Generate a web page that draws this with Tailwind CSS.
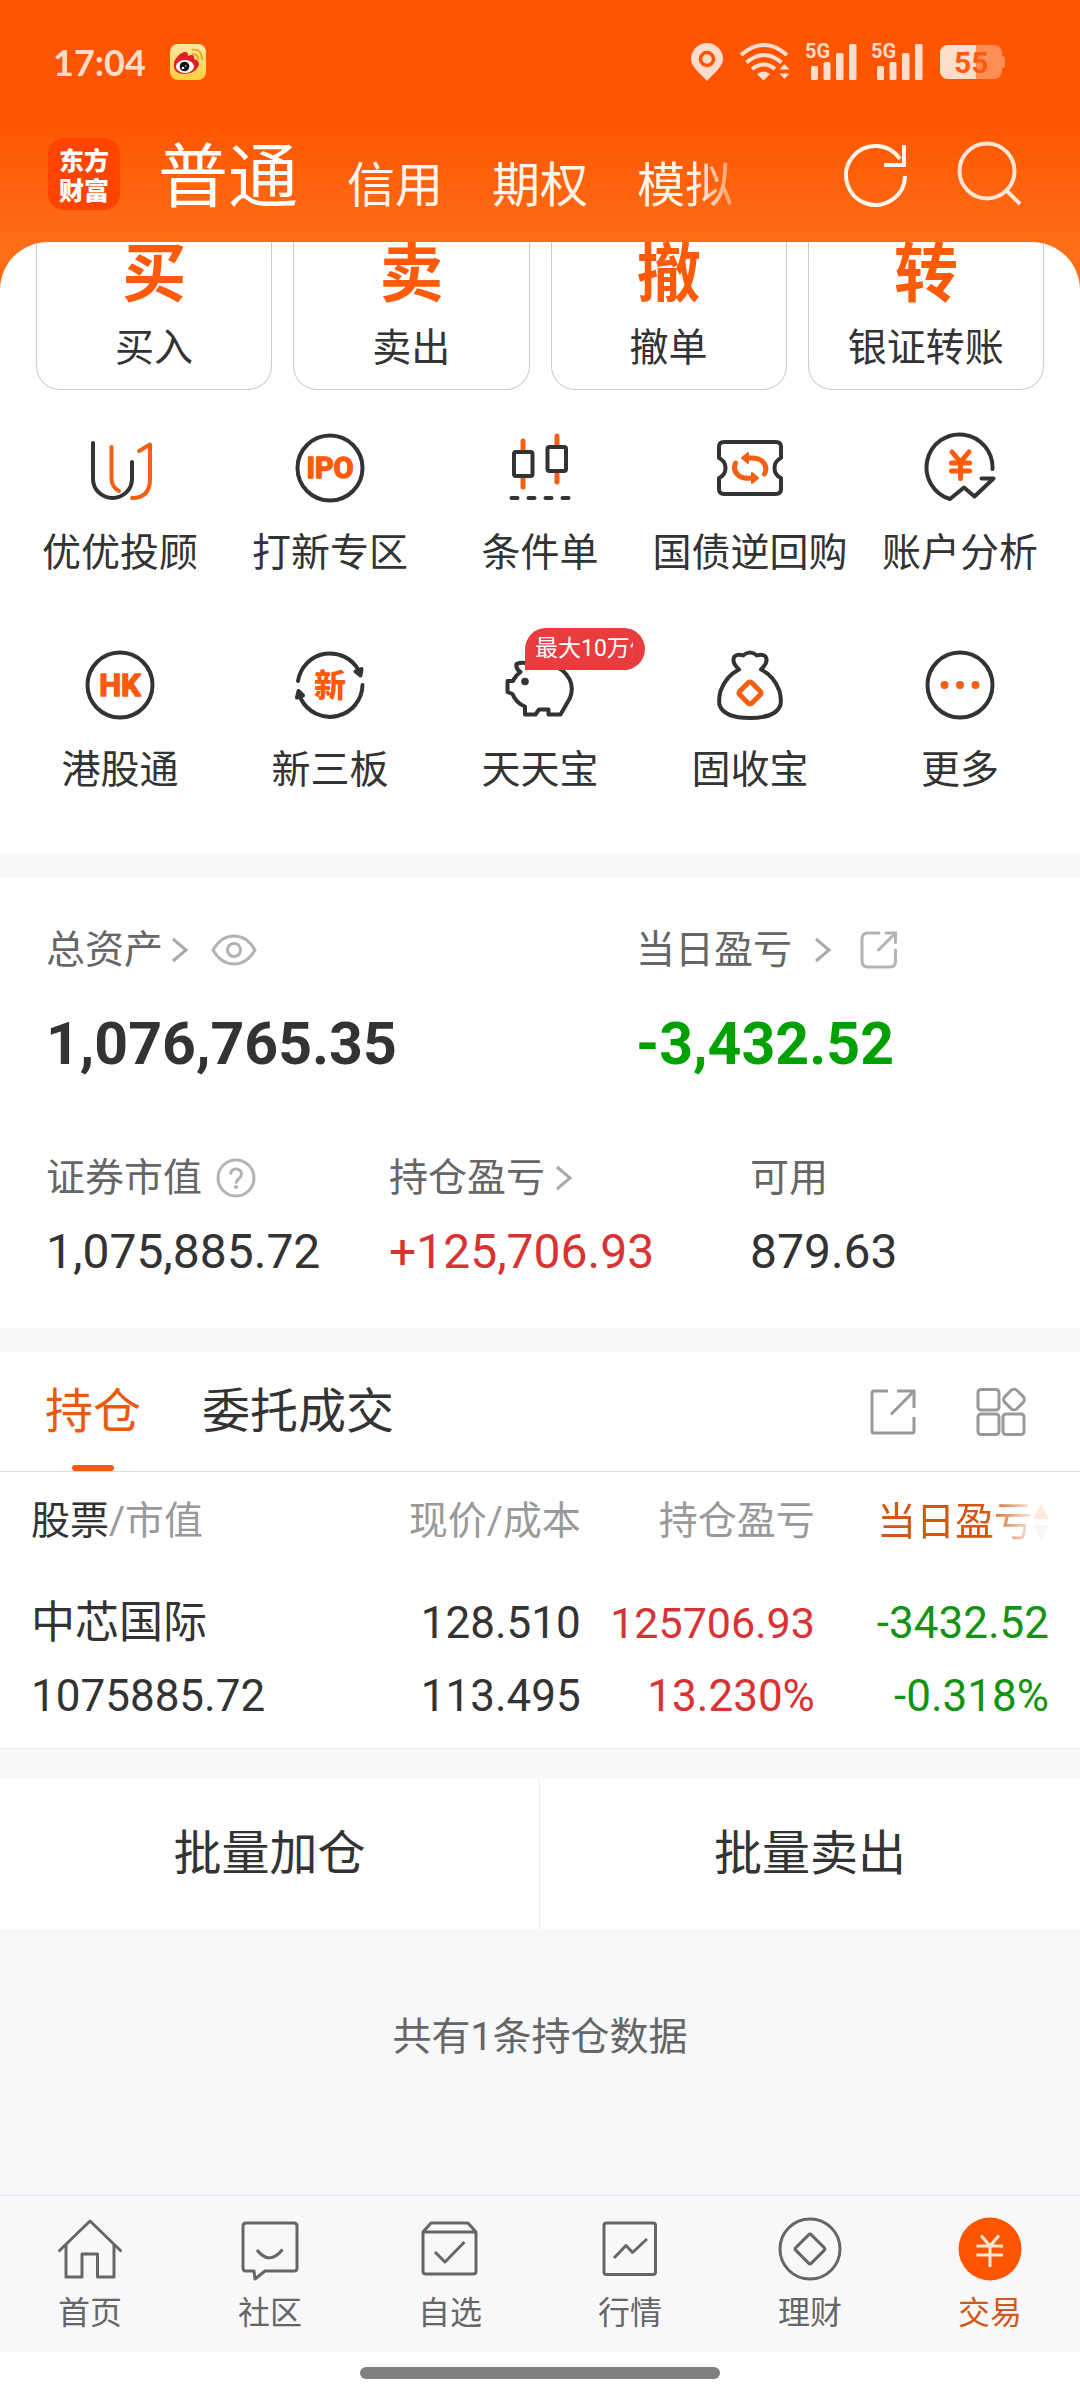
<!DOCTYPE html>
<html lang="zh-CN">
<head>
<meta charset="utf-8">
<meta name="viewport" content="width=device-width, initial-scale=1">
<title>交易</title>
<script src="https://cdn.jsdelivr.net/npm/@tailwindcss/browser@4"></script>
</head>
<body class="flex min-h-screen flex-col bg-[#f7f8fa] font-['Roboto','Noto_Sans_CJK_SC',sans-serif] text-[39px] leading-[44px] text-[#333]">

<!-- Header -->
<header class="bg-linear-to-b from-[#ff5500] from-50% to-[#ff6d16]">
  <div class="flex h-[120px] items-center justify-between pt-1 pr-[75px] pl-[53px]">
    <div class="flex items-center gap-6">
      <time class="font-['Lato',sans-serif] text-4xl font-bold text-[#ffdccc]">17:04</time>
      <svg class="h-9 w-9" viewBox="0 0 36 36" aria-label="微博">
        <defs><linearGradient id="wb" x1="0" y1="0" x2="0" y2="1"><stop offset="0" stop-color="#ffe9a6"/><stop offset="1" stop-color="#ffd03a"/></linearGradient></defs>
        <rect width="36" height="36" rx="8" fill="url(#wb)"/>
        <path d="M4 22C3 15 11 8 15 8c3 0 3 2 3 4 4-2 7-1 6 3 5 1 6 5 4 8-3 5-9 7-14 7-6 0-10-3-10-8Z" fill="#e01f26"/>
        <ellipse cx="15" cy="22.500" rx="9" ry="6.500" fill="#fff"/>
        <circle cx="14.500" cy="22.500" r="4.800" fill="#111"/><circle cx="13" cy="24" r="1.300" fill="#fff"/><circle cx="15.800" cy="22" r=".7" fill="#fff"/>
        <path d="M23 5.500q9 0 9 9.500M23 10q5 0 5 5" fill="none" stroke="#eba52c" stroke-width="2.200" stroke-linecap="round"/>
      </svg>
    </div>
    <div class="flex items-center">
      <svg class="mr-4 h-[38px] w-8" viewBox="0 0 32 38" aria-label="定位"><path d="M16 0a16 16 0 0 1 16 16c0 8-9 14-16 22C9 30 0 24 0 16A16 16 0 0 1 16 0Z" fill="#ffdccc"/><circle cx="16" cy="16" r="6.500" fill="none" stroke="#ff5500" stroke-width="3.500"/></svg>
      <svg class="mr-[14px] h-[38px] w-[52px]" viewBox="0 0 52 38" fill="none" stroke="#ffdccc" stroke-width="4" aria-label="无线网络"><path d="M2 12Q25-8 48 12M7.500 19.500q17.500-15 35 0M13 26q12-9 23 0"/><path d="M18 31q7-5 13 0l-6.500 6.500ZM40.500 26.500l5-5.500 5 5.500ZM40.500 30.500l5 5.500 5-5.500Z" fill="#ffdccc" stroke="none"/></svg>
      <svg class="mr-[14px] h-[38px] w-[52px] overflow-visible" viewBox="0 0 52 38" fill="#ffdccc" aria-label="5G 信号"><text x="0" y="15" font-size="20" font-weight="700" font-family="Roboto">5G</text><rect x="6" y="23" width="7" height="14" rx="1.500"/><rect x="18.500" y="19" width="7" height="18" rx="1.500"/><rect x="31" y="10" width="7.500" height="27" rx="1.500"/><rect x="44" y="1" width="7.500" height="36" rx="1.500"/></svg>
      <svg class="mr-4 h-[38px] w-[52px] overflow-visible" viewBox="0 0 52 38" fill="#ffdccc" aria-label="5G 信号"><text x="0" y="15" font-size="20" font-weight="700" font-family="Roboto">5G</text><rect x="6" y="23" width="7" height="14" rx="1.500"/><rect x="18.500" y="19" width="7" height="18" rx="1.500"/><rect x="31" y="10" width="7.500" height="27" rx="1.500"/><rect x="44" y="1" width="7.500" height="36" rx="1.500"/></svg>
      <svg class="h-[34px] w-[66px] overflow-visible" viewBox="0 0 66 34" aria-label="电量"><path d="M9 0H55a8 8 0 0 1 8 8v3q3 0 3 3v6q0 3-3 3v3a8 8 0 0 1-8 8H9a8 8 0 0 1-8-8V8a8 8 0 0 1 8-8Z" fill="#ff8e56"/><path d="M37 0H9a8 8 0 0 0-8 8v18a8 8 0 0 0 8 8h28Z" fill="#ffdccc"/><text x="15" y="28" font-size="30" font-weight="700" font-family="Roboto" fill="#ff5c0a">55</text></svg>
    </div>
  </div>
  <div class="flex h-[122px] items-center pb-[14px] pl-12 pr-[58px]">
    <a href="#" class="mr-[38px] flex h-[72px] w-[72px] shrink-0 flex-col items-center justify-center rounded-2xl bg-[#ff4400] font-['Noto_Sans_CJK_SC',sans-serif] text-[25px] leading-[30px] font-black text-white"><span>东方</span><span>财富</span></a>
    <nav class="flex min-w-0 flex-1 items-baseline gap-[49px] overflow-hidden pt-4 text-5xl leading-[76px] whitespace-nowrap text-[#fff5ec]">
      <button class="text-[70px] text-white">普通</button>
      <button>信用</button>
      <button>期权</button>
      <button class="[mask-image:linear-gradient(to_right,black_60%,#0006)]">模拟</button>
    </nav>
    <button class="mr-11" aria-label="刷新"><svg class="h-[68px] w-[68px]" viewBox="0 0 68 68" fill="none" stroke="#fff5ec" stroke-width="4"><path d="M63 36A29.500 29.500 0 1 1 58 19"/><path d="M62 5V25H42"/></svg></button>
    <button aria-label="搜索"><svg class="h-[68px] w-[68px]" viewBox="0 0 68 68" fill="none" stroke="#ffe6d6" stroke-width="4"><circle cx="33" cy="31" r="27.500"/><path d="M52 50L66 64"/></svg></button>
  </div>
</header>

<main class="flex-1">
  <!-- Trade entries -->
  <div class="bg-[#ff6d16]">
    <section class="overflow-hidden rounded-t-[48px] bg-white pb-[62px]">
      <div class="grid grid-cols-4 gap-[21px] px-9 text-center">
        <a href="#" class="rounded-b-3xl border border-t-0 border-[#ccc] pb-[19px]"><span class="block text-[64px] leading-[66px] font-bold text-[#fd5a0a]">买</span><span class="mt-[18px] block">买入</span></a>
        <a href="#" class="rounded-b-3xl border border-t-0 border-[#ccc] pb-[19px]"><span class="block text-[64px] leading-[66px] font-bold text-[#fd5a0a]">卖</span><span class="mt-[18px] block">卖出</span></a>
        <a href="#" class="rounded-b-3xl border border-t-0 border-[#ccc] pb-[19px]"><span class="block text-[64px] leading-[66px] font-bold text-[#fd5a0a]">撤</span><span class="mt-[18px] block">撤单</span></a>
        <a href="#" class="rounded-b-3xl border border-t-0 border-[#ccc] pb-[19px]"><span class="block text-[64px] leading-[66px] font-bold text-[#fd5a0a]">转</span><span class="mt-[18px] block">银证转账</span></a>
      </div>

      <div class="mt-[42px] grid grid-cols-5 gap-y-[74px] px-[15px] whitespace-nowrap">
        <a href="#" class="flex flex-col items-center gap-[27px]">
          <svg class="h-[72px] w-[72px]" viewBox="0 0 72 72" fill="none" stroke-width="4" stroke-linecap="round" stroke-linejoin="round"><path d="M9 11V47a19.500 19 0 0 0 39 0V30" stroke="#333"/><path d="M27.500 15V46q0 9 7.500 13M55 19L66 12.500V47q0 19-18 19" stroke="#f55f14"/></svg>
          <span>优优投顾</span></a>
        <a href="#" class="flex flex-col items-center gap-[27px]">
          <svg class="h-[72px] w-[72px]" viewBox="0 0 72 72"><circle cx="36" cy="36" r="32.500" fill="none" stroke="#333" stroke-width="4"/><text x="36" y="46" text-anchor="middle" font-family="Roboto" font-size="29" font-weight="700" fill="#fd5a0a" stroke="#fd5a0a" stroke-width="1.500" stroke-linejoin="round">IPO</text></svg>
          <span>打新专区</span></a>
        <a href="#" class="flex flex-col items-center gap-[27px]">
          <svg class="h-[72px] w-[72px]" viewBox="0 0 72 72" fill="none" stroke-width="4" stroke-linecap="round"><path d="M19 9V17M19 47V55M53 4V12M53 42V50" stroke="#f55f14" stroke-width="5"/><g stroke="#333"><rect x="10" y="20" width="18.500" height="24" rx="2"/><rect x="43.500" y="15" width="18.500" height="24" rx="2"/><path d="M7.500 66h6M24.500 66h6M41.500 66h6M58.500 66h6"/></g></svg>
          <span>条件单</span></a>
        <a href="#" class="flex flex-col items-center gap-[27px]">
          <svg class="h-[72px] w-[72px]" viewBox="0 0 72 72" fill="none" stroke-width="4" stroke-linejoin="round"><path d="M10 10H62q5 0 5 5V26Q60.500 29 60.500 36T67 46V57q0 5-5 5H10q-5 0-5-5V46Q11.500 43 11.500 36T5 26V15q0-5 5-5Z" stroke="#333"/><g stroke="#f55f14" stroke-width="5" stroke-linecap="round"><path d="M21.500 31Q18.500 38 24 43 28 47 37 46M50.500 42Q54 35 48.500 29.500 44.500 25.500 35 26"/><path d="M38 41v10l6-5ZM34 21v10l-6-5Z" fill="#f55f14" stroke-width="2"/></g></svg>
          <span>国债逆回购</span></a>
        <a href="#" class="flex flex-col items-center gap-[27px]">
          <svg class="h-[72px] w-[72px]" viewBox="0 0 72 72" fill="none" stroke-width="4" stroke-linecap="round" stroke-linejoin="round"><path d="M68.500 37A33 33 0 1 0 26 67L40 55.500 50.500 64.500 69.500 46.500H57.500" stroke="#333"/><path d="M28 20L36.500 30 45 20M36.500 31V46.500M27.500 31H45.500M27.500 39H45.500" stroke="#fd5a0a" stroke-width="5"/></svg>
          <span>账户分析</span></a>
        <a href="#" class="flex flex-col items-center gap-[27px]">
          <svg class="h-[72px] w-[72px]" viewBox="0 0 72 72"><circle cx="36" cy="36" r="32.500" fill="none" stroke="#333" stroke-width="4"/><text x="36" y="47" text-anchor="middle" font-family="Roboto" font-size="31" font-weight="700" fill="#fd5a0a" stroke="#fd5a0a" stroke-width="1.500" stroke-linejoin="round">HK</text></svg>
          <span>港股通</span></a>
        <a href="#" class="flex flex-col items-center gap-[27px]">
          <svg class="h-[72px] w-[72px]" viewBox="0 0 72 72" fill="none" stroke="#333" stroke-width="4" stroke-linecap="round" stroke-linejoin="round"><path d="M4 32A32.500 32.500 0 0 1 65 22M68.500 36A32.500 32.500 0 0 1 7 50"/><path d="M61.500 22.500L67.500 20 66.500 26.500ZM3 48.500L4.500 42 9 46.500Z" fill="#333"/><text x="36" y="48" text-anchor="middle" font-family="Noto Sans CJK SC" font-size="32" font-weight="900" fill="#fd5a0a" stroke="none">新</text></svg>
          <span>新三板</span></a>
        <a href="#" class="flex flex-col items-center gap-[27px]">
          <span class="relative block">
            <svg class="h-[72px] w-[72px]" viewBox="0 0 72 72" fill="none" stroke="#333" stroke-width="4" stroke-linejoin="round"><path d="M24 14.500Q17 13 12.500 15 11.500 20 16.500 23 11 27 9 32H3.500V43L8.500 45Q12 54 21 57.500V65.500H31.500L35 60.500H44.500V65.500H56.500L66 49Q72 33 58 21 44 12 24 14.500Z"/><circle cx="21" cy="32.500" r="3.800" fill="#333" stroke="none"/></svg>
            <span class="absolute -top-[21px] left-[21px] h-[42px] w-[120px] rounded-full rounded-bl-none bg-[#e83c3e] pl-[10px] text-[23px] leading-[42px] text-white"><span class="block w-[98px] overflow-hidden">最大10万体验金</span></span>
          </span>
          <span>天天宝</span></a>
        <a href="#" class="flex flex-col items-center gap-[27px]">
          <svg class="h-[72px] w-[72px]" viewBox="0 0 72 72" fill="none" stroke="#333" stroke-width="4" stroke-linejoin="round"><path d="M25 20.500Q17 13 20.500 7.500 24 4.500 29 6.500 36 .5 43 6.500 48 4.500 51.500 7.500 55 13 47 20.500 60 27 65.500 42 67.500 50 66.500 56C63 66 52 69 36 69S9 66 5.500 56Q4.500 50 6.500 42 12 27 25 20.500Z"/><rect x="27.500" y="35.500" width="17" height="17" rx="2.500" transform="rotate(45 36 44)" stroke="#f55f14" stroke-width="5"/></svg>
          <span>固收宝</span></a>
        <a href="#" class="flex flex-col items-center gap-[27px]">
          <svg class="h-[72px] w-[72px]" viewBox="0 0 72 72"><circle cx="36" cy="36" r="32.500" fill="none" stroke="#333" stroke-width="4"/><g fill="#f55f14"><circle cx="20.500" cy="36" r="4"/><circle cx="36" cy="36" r="4"/><circle cx="51.500" cy="36" r="4"/></g></svg>
          <span>更多</span></a>
      </div>
    </section>
  </div>

  <!-- Assets -->
  <section class="mt-6 bg-white px-[46px] pt-[50px] pb-12">
    <div class="grid grid-cols-[590fr_398fr]">
      <div>
        <div class="flex items-center text-[#666]"><a href="#" class="flex items-center gap-2">总资产<svg class="h-[26px] w-[18px]" viewBox="0 0 18 26" fill="none" stroke="#aaa" stroke-width="3"><path d="M2 2L15 13 2 24"/></svg></a>
          <button class="ml-[22px]" aria-label="显示金额"><svg class="h-8 w-[46px]" viewBox="0 0 46 32" fill="none" stroke="#b3b3b3" stroke-width="3"><path d="M2 16Q10 2 23 2T44 16Q36 30 23 30T2 16Z"/><circle cx="23" cy="16" r="6.500"/></svg></button></div>
        <div class="mt-9 text-[59px] leading-[72px] font-bold">1,076,765.35</div>
      </div>
      <div>
        <div class="flex items-center text-[#666]"><a href="#" class="flex items-center gap-[22px]">当日盈亏<svg class="h-[26px] w-[18px]" viewBox="0 0 18 26" fill="none" stroke="#aaa" stroke-width="3"><path d="M2 2L15 13 2 24"/></svg></a>
          <button class="ml-7" aria-label="分享"><svg class="h-[38px] w-[38px]" viewBox="0 0 38 38" fill="none" stroke="#b3b3b3" stroke-width="3" stroke-linecap="round"><path d="M19 2H8Q2 2 2 8V30q0 6 6 6H29.500q6 0 6-6V19M26 2H35.500V11.500M18.500 19L35.500 2"/></svg></button></div>
        <div class="mt-9 text-[59px] leading-[72px] font-bold text-[#00a000]">-3,432.52</div>
      </div>
    </div>
    <div class="mt-[76px] grid grid-cols-[343fr_361fr_284fr]">
      <div>
        <div class="flex items-center gap-[14px] text-[#666]">证券市值<button aria-label="说明"><svg class="h-10 w-10" viewBox="0 0 40 40" fill="none" stroke="#b3b3b3" stroke-width="3"><circle cx="20" cy="20" r="18"/><path d="M14.500 16.500Q15 11 20 11T25.500 16Q25.500 18 23 20.500 20 23 20 25.500"/><circle cx="20" cy="29" r="1" stroke-width="2"/></svg></button></div>
        <div class="mt-6 text-5xl leading-[56px]">1,075,885.72</div>
      </div>
      <div>
        <a href="#" class="flex items-center gap-[10px] text-[#666]">持仓盈亏<svg class="h-[26px] w-[18px]" viewBox="0 0 18 26" fill="none" stroke="#aaa" stroke-width="3"><path d="M2 2L15 13 2 24"/></svg></a>
        <div class="mt-6 text-5xl leading-[56px] text-[#d93232]">+125,706.93</div>
      </div>
      <div>
        <div class="text-[#666]">可用</div>
        <div class="mt-6 text-5xl leading-[56px]">879.63</div>
      </div>
    </div>
  </section>

  <!-- Positions -->
  <section class="mt-6 border-b border-[#e8e8e8] bg-white">
    <div class="flex h-[120px] items-center border-b border-[#ddd] pr-[54px] pl-[45px] text-5xl">
      <button class="relative mr-[61px] h-full text-[#ea5a0e]">持仓<span class="absolute bottom-0 left-1/2 h-[6px] w-[42px] -translate-x-1/2 rounded-full bg-[#f55a10]"></span></button>
      <button class="h-full">委托成交</button>
      <button class="mr-[59px] ml-auto" aria-label="分享"><svg class="h-12 w-12" viewBox="0 0 48 48" fill="none" stroke="#999" stroke-width="3"><path d="M19 3H5Q3 3 3 5V43q0 2 2 2H43q2 0 2-2V29M28 3H45V20M22 26.500L45 3"/></svg></button>
      <button aria-label="更多功能"><svg class="h-[50px] w-[50px]" viewBox="0 0 50 50" fill="none" stroke="#999" stroke-width="3"><rect x="2" y="2.500" width="21" height="20.500" rx="3"/><rect x="2" y="27" width="21" height="20.500" rx="3"/><rect x="27" y="27" width="21" height="20.500" rx="3"/><rect x="29.500" y="4" width="17" height="17" rx="4" transform="rotate(45 38 12.500)"/></svg></button>
    </div>
    <div class="px-[31px]">
      <table class="w-full table-fixed text-right">
        <thead class="text-[#999]">
          <tr class="h-[98px]">
            <th class="w-[29%] text-left font-normal"><span class="text-[#333]">股票</span>/市值</th>
            <th class="w-[25%] font-normal">现价/成本</th>
            <th class="w-[23%] font-normal">持仓盈亏</th>
            <th class="w-[23%] font-normal"><button class="inline-flex items-center align-middle whitespace-nowrap text-[#d4560f] [mask-image:linear-gradient(to_right,black_64%,#0004_86%,#0002_90%)]">当日盈亏<svg class="h-9 w-4" viewBox="0 0 16 36"><path d="M8 0L16 15H0Z" fill="#ff5500"/><path d="M0 21H16L8 36Z" fill="#bbb"/></svg></button></th>
          </tr>
        </thead>
        <tbody class="text-[44px] leading-[73px]">
          <tr>
            <td class="pt-[17px] pb-[15px] text-left"><div>中芯国际</div><div>1075885.72</div></td>
            <td class="pt-[17px] pb-[15px]"><div>128.510</div><div>113.495</div></td>
            <td class="pt-[17px] pb-[15px] text-[#d93232]"><div class="text-[43px]">125706.93</div><div>13.230%</div></td>
            <td class="pt-[17px] pb-[15px] text-[#129312]"><div>-3432.52</div><div>-0.318%</div></td>
          </tr>
        </tbody>
      </table>
    </div>
  </section>

  <div class="mt-[30px] grid h-[150px] grid-cols-2 bg-white text-5xl">
    <button class="border-r border-[#eee]">批量加仓</button>
    <button>批量卖出</button>
  </div>
  <p class="pt-[86px] text-center text-[#666]">共有1条持仓数据</p>
</main>

<!-- Bottom navigation -->
<footer class="bg-white">
  <nav class="grid h-[157px] grid-cols-6 border-t border-[#dfe2e4] bg-[#f8f8fa] pt-[21px] text-[32px] text-[#666]">
    <a href="#" class="flex flex-col items-center gap-[10px]"><svg class="h-16 w-16" viewBox="0 0 64 64" fill="none" stroke="#666" stroke-width="3" stroke-linejoin="round"><path d="M.5 34.500L32 4 63.500 34.500M8 28V60H24V37H39.500V60H56V28"/></svg>首页</a>
    <a href="#" class="flex flex-col items-center gap-[10px]"><svg class="h-16 w-16" viewBox="0 0 64 64" fill="none" stroke="#666" stroke-width="3" stroke-linejoin="round"><path d="M8 6H56q3 0 3 3V51q0 3-3 3H27L17 62 16 54H8q-3 0-3-3V9q0-3 3-3Z"/><path d="M19 33Q31.500 49 44.500 32.500"/></svg>社区</a>
    <a href="#" class="flex flex-col items-center gap-[10px]"><svg class="h-16 w-16" viewBox="0 0 64 64" fill="none" stroke="#666" stroke-width="3" stroke-linejoin="round"><path d="M5 15L13 6H50L58 15V54q0 3-3 3H8q-3 0-3-3ZM5 15H58M17 35L27 45 46.500 25"/></svg>自选</a>
    <a href="#" class="flex flex-col items-center gap-[10px]"><svg class="h-16 w-16" viewBox="0 0 64 64" fill="none" stroke="#666" stroke-width="3" stroke-linejoin="round"><rect x="6" y="6" width="51.500" height="51.500" rx="2.500"/><path d="M16 41L28 28.500 34.500 35.500 49 22"/></svg>行情</a>
    <a href="#" class="flex flex-col items-center gap-[10px]"><svg class="h-16 w-16" viewBox="0 0 64 64" fill="none" stroke="#666" stroke-width="3"><circle cx="32" cy="32" r="30"/><rect x="21" y="21" width="22" height="22" rx="2" transform="rotate(45 32 32)"/></svg>理财</a>
    <a href="#" class="flex flex-col items-center gap-[10px] text-[#cf5a18]" aria-current="page"><svg class="h-16 w-16" viewBox="0 0 64 64" fill="none" stroke="#ffe9d6" stroke-width="3"><circle cx="32" cy="32" r="31.500" fill="#ff5500" stroke="none"/><path d="M23 18.500L32 29 41 18.500M32 28V50M18.500 29H45M18.500 38H45"/></svg>交易</a>
  </nav>
  <div class="flex h-12 justify-center pt-[15px]"><div class="h-3 w-1/3 rounded-full bg-[#808080]"></div></div>
</footer>
</body>
</html>
